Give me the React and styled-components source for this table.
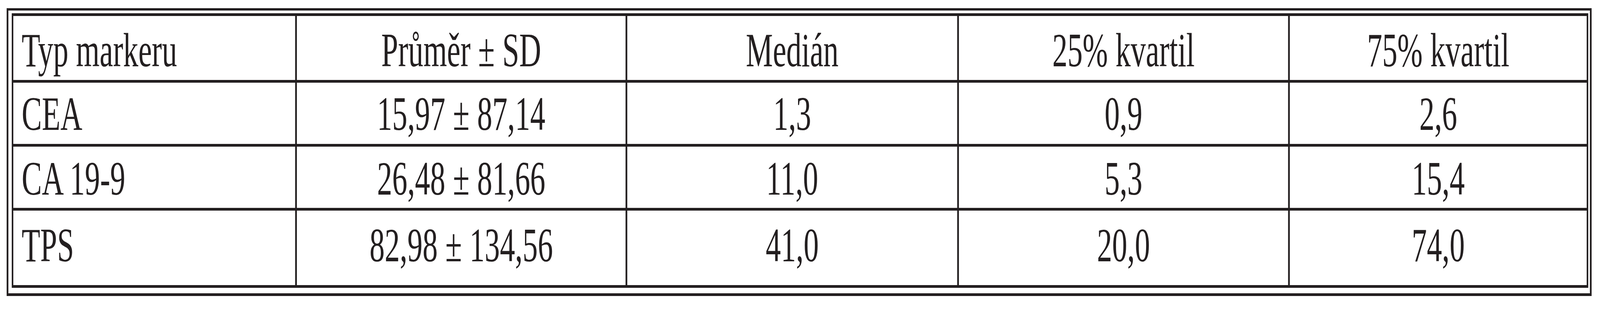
import React from 'react';
import styled, { createGlobalStyle } from 'styled-components';

const ink = '#231f20';
const DESIGN_WIDTH = 6489;

const GlobalStyle = createGlobalStyle`
  html, body {
    margin: 0;
    padding: 0;
    background: #ffffff;
    overflow: hidden;
  }
`;

const Page = styled.div`
  width: ${DESIGN_WIDTH}px;
  padding: 21px 0 0 27px;
  box-sizing: border-box;
  background: #ffffff;
  transform-origin: 0 0;
`;

const Frame = styled.div`
  box-sizing: border-box;
  width: 6428px;
  border-style: solid;
  border-color: ${ink};
  border-width: 6px 7px 7px 7px;
  padding: 7px 7px 14px 14px;
`;

const Grid = styled.div`
  box-sizing: border-box;
  width: 6393px;
  display: grid;
  grid-template-columns: 1143px 1333px 1338px 1335px 1204px;
  grid-template-rows: 164px 157px 157px 191px;
  gap: 7px;
  border-style: solid;
  border-color: ${ink};
  border-width: 7px 6px;
  background: ${ink};
`;

const Cell = styled.div`
  box-sizing: border-box;
  background: #ffffff;
  padding-top: ${(p) => p.$top}px;
  padding-left: ${(p) => (p.$left ? 34 : 0)}px;
  text-align: ${(p) => (p.$left ? 'left' : 'center')};
  font-family: 'Liberation Serif', 'Times New Roman', serif;
  font-size: 123px;
  line-height: 123px;
  color: ${ink};
  white-space: nowrap;
`;

const header = ['Typ markeru', 'Průměr ± SD', 'Medián', '25% kvartil', '75% kvartil'];

const rows = [
  ['CEA', '15,97 ± 87,14', '1,3', '0,9', '2,6'],
  ['CA 19-9', '26,48 ± 81,66', '11,0', '5,3', '15,4'],
  ['TPS', '82,98 ± 134,56', '41,0', '20,0', '74,0'],
];

// baseline offsets differ a little per row in the source
const rowTops = [26, 18, 20, 27];

const App = () => {
  const all = [header, ...rows];
  // the table is laid out at the design width and squeezed to fit the window
  const vw = document.documentElement.clientWidth || window.innerWidth;
  const scale = Math.min(1, vw / DESIGN_WIDTH);
  return (
    <>
      <GlobalStyle />
      <Page style={{ transform: `scaleX(${scale})` }}>
        <Frame>
          <Grid>
            {all.map((row, r) =>
              row.map((text, c) => (
                <Cell key={`${r}-${c}`} $top={rowTops[r]} $left={c === 0}>
                  {text}
                </Cell>
              ))
            )}
          </Grid>
        </Frame>
      </Page>
    </>
  );
};

export default App;
